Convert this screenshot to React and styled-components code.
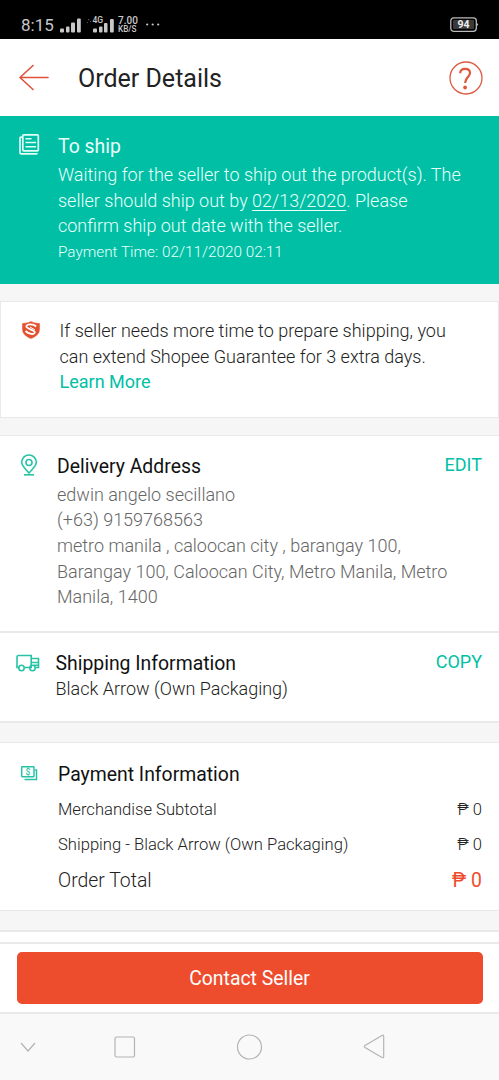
import React from "react"
import styled, { createGlobalStyle } from "styled-components"

const teal = "#00bfa5"
const orange = "#ee4d2d"

const GlobalStyle = createGlobalStyle`
  * { box-sizing: border-box; }
  body {
    margin: 0;
    background: #f6f6f6;
    font-family: Roboto, "Liberation Sans", sans-serif;
    color: #222;
  }
`

const Screen = styled.div`
  width: 499px;
  height: 1080px;
  display: flex;
  flex-direction: column;
  overflow: hidden;
`

const StatusBar = styled.div`
  height: 39px;
  padding: 11px 20px 0 21px;
  background: #000;
  color: #c8c8c8;
  display: flex;
  align-items: center;
  flex-shrink: 0;
`

const Clock = styled.div`
  width: 39px;
  font-size: 17px;
`

const Speed = styled.div`
  width: 28px;
  margin-left: -2px;
  font-size: 10px;
  font-weight: 500;
  line-height: 8.5px;
  white-space: nowrap;
  div + div { font-size: 8.2px; }
`

const Battery = styled.div`
  margin-left: auto;
  display: flex;
`

const Header = styled.header`
  height: 77px;
  padding: 1px 16px 0 18px;
  background: #fff;
  display: flex;
  align-items: center;
  flex-shrink: 0;
`

const Title = styled.h1`
  margin: 1px auto 0 29px;
  font-size: 25px;
  font-weight: 400;
  line-height: 30px;
`

const Banner = styled.section`
  height: 168px;
  padding: 17px 0 0 18px;
  background: ${teal};
  color: #e9fffb;
  display: flex;
  flex-shrink: 0;
`

const Panel = styled.section`
  height: ${p => p.$height}px;
  margin-top: ${p => p.$gap || 0}px;
  padding: ${p => p.$pad}px 17px 0 16px;
  background: #fff;
  border: solid #e8eaea;
  border-width: ${p => p.$border || "1px 0"};
  display: flex;
  flex-shrink: 0;
`

const IconCell = styled.div`
  width: ${p => p.$width}px;
  padding-left: ${p => p.$left || 0}px;
  padding-top: ${p => p.$top || 0}px;
  flex-shrink: 0;
  svg { display: block; }
`

const Body = styled.div`
  flex: 1;
  min-width: 0;
  white-space: nowrap;
`

const Heading = styled.h2`
  margin: 0 0 ${p => p.$below || 0}px;
  font-size: 19.4px;
  font-weight: 400;
  line-height: 28px;
  color: #111;
`

const BannerHeading = styled(Heading)`
  line-height: 27px;
  color: inherit;
`

const Text = styled.p`
  margin: 0;
  font-size: 18px;
  font-weight: 300;
  line-height: 25.7px;
  color: ${p => p.$color || "inherit"};
`

const Small = styled(Text)`
  padding-top: 1px;
  font-size: 15.3px;
`

const DateLink = styled.span`
  text-decoration: underline;
  text-decoration-thickness: 1px;
  text-underline-offset: 3px;
`

const Link = styled.a`
  color: ${teal};
  font-weight: 400;
  cursor: pointer;
`

const Action = styled.a`
  color: ${teal};
  font-size: 18px;
  line-height: 24px;
  cursor: pointer;
`

const Row = styled.div`
  display: flex;
  justify-content: space-between;
  align-items: center;
  height: 35px;
  padding-top: ${p => p.$total ? 1 : 0}px;
  font-size: ${p => p.$total ? 19.4 : 16.6}px;
  font-weight: 300;
`

const Price = styled.span`
  color: ${p => p.$total ? orange : "inherit"};
  font-weight: ${p => p.$total ? 400 : 300};
`

const Footer = styled.footer`
  height: 72px;
  padding: 8px 16px;
  background: #fff;
  border-top: 2px solid #e8eaea;
  border-bottom: 2px solid #e8eaea;
  flex-shrink: 0;
`

const Button = styled.button`
  display: block;
  width: 466px;
  height: 52px;
  margin: 0 auto;
  padding: 0;
  border: 0;
  border-radius: 5px;
  background: ${orange};
  color: #fff;
  font: 400 19.4px Roboto, sans-serif;
`

const Nav = styled.nav`
  flex: 1;
  background: #f9f9f9;
  svg { display: block; }
`

const Signal = ({ network }) => (
  <svg width={network ? 34 : 26} height="20" fill="#c8c8c8">
    {network ? (
      <>
        <path d="M2 4h1.2v1.2H2zM4 6h1v1H4zM1 7h1v1H1z" fill="#555" />
        <text x="6.5" y="8" fontSize="8.5" fontWeight="500" fontFamily="Roboto">4G</text>
        <rect x="7" y="13.5" width="4" height="4" rx="1" />
        <rect x="13" y="11.5" width="3.5" height="6" rx="1" />
        <rect x="18" y="8" width="3.5" height="9.5" rx="1" />
        <rect x="24" y="4" width="3.8" height="13.5" rx="1" />
      </>
    ) : (
      <>
        <rect x="0" y="13.5" width="4" height="4" rx="1" />
        <rect x="6" y="11.5" width="3.5" height="6" rx="1" />
        <rect x="11" y="7.5" width="4" height="10" rx="1" />
        <rect x="17" y="3.5" width="3.8" height="14" rx="1" />
      </>
    )}
  </svg>
)

const BackIcon = () => (
  <svg width="31" height="28" fill="none" stroke="#e0523a" strokeWidth="1.6" strokeLinecap="round" strokeLinejoin="round">
    <path d="M15 1.500 2 13.500l13 12M2 13.500h28" />
  </svg>
)

const HelpIcon = () => (
  <svg width="34" height="34" fill="none" stroke="#de5840">
    <circle cx="17" cy="17" r="16" strokeWidth="1.3" />
    <path d="M11.2 12.3c0-3 2-4.500 4.900-4.500s4.900 1.700 4.900 4.300c0 4-4.900 4.300-4.900 9.800" strokeWidth="2.200" />
    <circle cx="16.100" cy="26.500" r="1.900" fill="#de5840" stroke="none" />
  </svg>
)

const OrderIcon = () => (
  <svg width="22" height="23" fill="none" stroke="#e0fff9" strokeWidth="1.700">
    <rect x="4.800" y="1.800" width="15.500" height="16" rx="1" />
    <path d="M4.500 4.200H3Q2 4.200 2 5.200v14.500q0 1.200 1.200 1.200H18q1 0 1-1" />
    <path d="M7.500 5.700h6M7.500 9.600h10.500M7.500 13.700h10.500" strokeWidth="1.500" />
  </svg>
)

const ShieldIcon = () => (
  <svg width="20" height="20">
    <path d="M10 1C7.500 2.500 4 3 1 3v6c0 5 4 8 9 10 5-2 9-5 9-10V3c-3 0-6.500-.5-9-2z" fill="#e2502f" stroke="#fbe3dd" strokeWidth="0.600" />
    <path d="M15.200 6.500C12.500 3.800 6 3.800 5.300 6.300c-.6 2.500 8.700 3.500 8.500 6.100-.3 2.600-6 1.900-9.300-1.400" fill="none" stroke="#fff" strokeWidth="1.800" />
    <path d="M9 7l5 3" fill="none" stroke="#fff" strokeWidth="1" />
  </svg>
)

const PinIcon = () => (
  <svg width="18" height="23" fill="none" stroke="#28c3a7" strokeWidth="1.600">
    <path d="M9 19C5.500 15 1.700 12 1.700 8.300a7.300 7.300 0 0 1 14.600 0C16.300 12 12.500 15 9 19z" />
    <circle cx="9" cy="8.500" r="3" />
    <path d="M4 20.800h10" />
  </svg>
)

const TruckIcon = () => (
  <svg width="25" height="19" fill="none" stroke="#28c3a7" strokeWidth="1.600">
    <path d="M3.200 13.500H1V3q0-1.500 1.500-1.500h12.700v12H8.500M15.200 4.500h7.300v9h-3M15.200 8.500h7.300M17.500 11.200h5" />
    <circle cx="5.500" cy="14" r="2.700" />
    <circle cx="16.500" cy="14" r="2.700" />
  </svg>
)

const MoneyIcon = () => (
  <svg width="19" height="17" fill="none" stroke="#28c3a7" strokeWidth="1.500">
    <rect x="1.700" y="1.700" width="12.300" height="10" rx="0.600" />
    <path d="M4.500 14.500h12V5h-1.500" />
    <text x="5.500" y="9.800" fontSize="8.500" fontWeight="500" fontFamily="Roboto" fill="#28c3a7" stroke="none">$</text>
  </svg>
)

const App = () => (
  <Screen>
    <GlobalStyle />
    <StatusBar>
      <Clock>8:15</Clock>
      <Signal />
      <Signal network />
      <Speed>
        <div>7.00</div>
        <div>KB/S</div>
      </Speed>
      <svg width="16" height="4" fill="#c8c8c8">
        <circle cx="1.200" cy="1.500" r="1.100" />
        <circle cx="6.700" cy="1.500" r="1.100" />
        <circle cx="12.200" cy="1.500" r="1.100" />
      </svg>
      <Battery>
        <svg width="29" height="16">
          <rect x="0.800" y="0.800" width="25.500" height="13.500" rx="3" fill="#000" stroke="#bbb" strokeWidth="1.300" />
          <rect x="3" y="3" width="21" height="9" rx="1" fill="#3a3a3a" />
          <path d="M26.800 5.800l1.500 1.700-1.500 1.700z" fill="#bbb" />
          <text x="7.500" y="11.300" fontSize="10.500" fontWeight="700" fontFamily="Roboto" fill="#eee">94</text>
        </svg>
      </Battery>
    </StatusBar>
    <Header>
      <BackIcon />
      <Title>Order Details</Title>
      <HelpIcon />
    </Header>
    <Banner>
      <IconCell $width={40}><OrderIcon /></IconCell>
      <Body>
        <BannerHeading $below={2}>To ship</BannerHeading>
        <Text>
          Waiting for the seller to ship out the product(s). The<br />
          seller should ship out by <DateLink>02/13/2020</DateLink>. Please<br />
          confirm ship out date with the seller.
        </Text>
        <Small>Payment Time: 02/11/2020 02:11</Small>
      </Body>
    </Banner>
    <Panel $height={117} $gap={17} $pad={16} $border="1px">
      <IconCell $width={42.5} $left={3.5} $top={2}><ShieldIcon /></IconCell>
      <Body>
        <Text>
          If seller needs more time to prepare shipping, you<br />
          can extend Shopee Guarantee for 3 extra days.<br />
          <Link>Learn More</Link>
        </Text>
      </Body>
    </Panel>
    <Panel $height={196} $gap={17} $pad={17} $border="1px 0 0">
      <IconCell $width={41} $left={4} $top={1}><PinIcon /></IconCell>
      <Body>
        <Heading $below={0.5}>Delivery Address</Heading>
        <Text $color="#666">
          edwin angelo secillano<br />
          (+63) 9159768563<br />
          metro manila , caloocan city , barangay 100,<br />
          Barangay 100, Caloocan City, Metro Manila, Metro<br />
          Manila, 1400
        </Text>
      </Body>
      <Action>EDIT</Action>
    </Panel>
    <Panel $height={92} $pad={17} $border="2px 0">
      <IconCell $width={39.5} $top={4}><TruckIcon /></IconCell>
      <Body>
        <Heading $below={-2}>Shipping Information</Heading>
        <Text>Black Arrow (Own Packaging)</Text>
      </Body>
      <Action>COPY</Action>
    </Panel>
    <Panel $height={169} $gap={19} $pad={18}>
      <IconCell $width={42} $left={4} $top={4}><MoneyIcon /></IconCell>
      <Body>
        <Heading $below={3}>Payment Information</Heading>
        <Row><span>Merchandise Subtotal</span><Price>₱ 0</Price></Row>
        <Row><span>Shipping - Black Arrow (Own Packaging)</span><Price>₱ 0</Price></Row>
        <Row $total><span>Order Total</span><Price $total>₱ 0</Price></Row>
      </Body>
    </Panel>
    <Panel $height={12} $gap={19} $pad={0} $border="2px 0 0" />
    <Footer>
      <Button>Contact Seller</Button>
    </Footer>
    <Nav>
      <svg width="499" height="66" fill="none" stroke="#b4b4b4" strokeWidth="1.200">
        <path d="M21 29l7 8 7-8" />
        <rect x="115" y="23" width="19.500" height="20" rx="1.500" />
        <circle cx="249.500" cy="33" r="12" />
        <path d="M382 21.500l-17 10q-1.500 1 0 2l17 10q1.700.8 1.700-1v-20q0-2-1.700-1z" />
      </svg>
    </Nav>
  </Screen>
)

export default App
